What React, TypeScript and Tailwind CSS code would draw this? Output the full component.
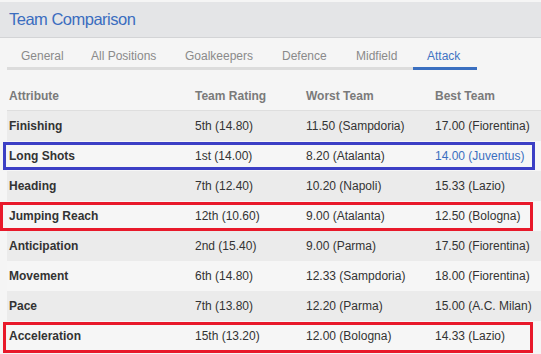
import { Fragment } from "react";
import clsx from "clsx";

const tabs = [
    { label: "General", width: "w-[70px]" },
    { label: "All Positions", width: "w-[94px]" },
    { label: "Goalkeepers", width: "w-[97px]" },
    { label: "Defence", width: "w-[74px]" },
    { label: "Midfield", width: "w-[71px]" },
    { label: "Attack", width: "w-[64px]" }
];

const rows = [
    { attr: "Finishing", rating: "5th (14.80)", worst: "11.50 (Sampdoria)", best: "17.00 (Fiorentina)" },
    { attr: "Long Shots", rating: "1st (14.00)", worst: "8.20 (Atalanta)", best: "14.00 (Juventus)", own: true },
    { attr: "Heading", rating: "7th (12.40)", worst: "10.20 (Napoli)", best: "15.33 (Lazio)" },
    { attr: "Jumping Reach", rating: "12th (10.60)", worst: "9.00 (Atalanta)", best: "12.50 (Bologna)" },
    { attr: "Anticipation", rating: "2nd (15.40)", worst: "9.00 (Parma)", best: "17.50 (Fiorentina)" },
    { attr: "Movement", rating: "6th (14.80)", worst: "12.33 (Sampdoria)", best: "18.00 (Fiorentina)" },
    { attr: "Pace", rating: "7th (13.80)", worst: "12.20 (Parma)", best: "15.00 (A.C. Milan)" },
    { attr: "Acceleration", rating: "15th (13.20)", worst: "12.00 (Bologna)", best: "14.33 (Lazio)" }
];

const App = () => {
    return (
        <div className="relative w-[541px] h-[354px] overflow-hidden bg-[#f5f5f5] pt-[2px] font-['Liberation_Sans',Arial,sans-serif]">
            {/* header */}
            <div className="h-[36px] bg-[#e4e5e7] border-b border-[#d3d4d6] pl-[9px] flex items-center text-[16.5px] tracking-[-0.5px] text-[#3b6dbf]">
                Team Comparison
            </div>

            {/* tabs */}
            <div className="flex ml-[7px]">
                {tabs.map((tab) => (
                    <div
                        key={tab.label}
                        className={clsx(
                            tab.width,
                            "pl-[14px] pt-[10px] pb-[3px] text-[12px] leading-4 whitespace-nowrap border-b-[3px]",
                            tab.label === "Attack"
                                ? "border-[#3a6fc0] text-[#3f73c3]"
                                : "border-[#dcdcdc] text-[#8a8a8a]"
                        )}>
                        {tab.label}
                    </div>
                ))}
            </div>

            {/* table */}
            <div className="ml-[7px] mt-[11px] text-[12px]">
                <div className="grid grid-cols-[186px_111px_129px_1fr] h-[30px] items-center border-b border-[#dedede] font-bold text-[#7a7a7a]">
                    <div className="pl-[2px]">Attribute</div>
                    <div className="pl-[2px]">Team Rating</div>
                    <div className="pl-[2px]">Worst Team</div>
                    <div className="pl-[2px]">Best Team</div>
                </div>
                {rows.map((row, rowIndex) => (
                    <Fragment key={row.attr}>
                        <div
                            className={clsx(
                                "grid grid-cols-[186px_111px_129px_1fr] h-[30px] items-center text-[#333333]",
                                rowIndex % 2 === 0 ? "bg-[#ebebeb]" : "bg-[#f6f6f6]"
                            )}>
                            <div className="pl-[2px] font-bold">{row.attr}</div>
                            <div className="pl-[2px]">{row.rating}</div>
                            <div className="pl-[2px]">{row.worst}</div>
                            <div className={clsx("pl-[2px]", row.own && "text-[#3a6fc0]")}>{row.best}</div>
                        </div>
                    </Fragment>
                ))}
            </div>

            {/* annotation boxes */}
            <div className="absolute left-[3px] top-[142px] w-[532px] h-[28px] border-[3px] border-[#3c3fc5]" />
            <div className="absolute left-0 top-[202px] w-[533px] h-[29px] border-[3px] border-[#e8192a]" />
            <div className="absolute left-[3px] top-[322px] w-[530px] h-[31px] border-[3px] border-[#e8192a]" />
        </div>
    );
};

export default App;
